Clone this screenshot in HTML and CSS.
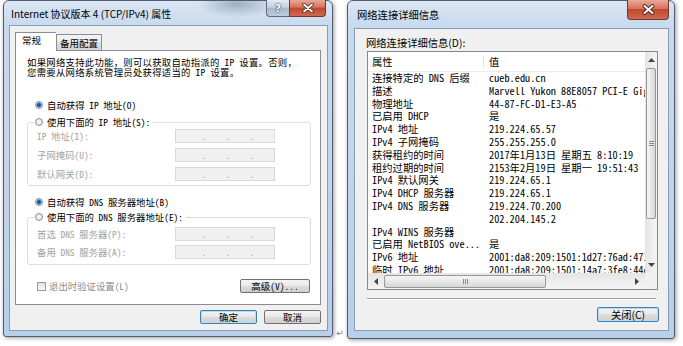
FILE: index.html
```html
<!DOCTYPE html>
<html lang="zh-CN">
<head>
  <meta charset="UTF-8" />
  <title>TCP/IPv4 属性 / 网络连接详细信息</title>
  <link rel="stylesheet" href="styles.css">
</head>
<body>
<div class="desk">

  <!-- left: IPv4 properties -->
  <div class="window props">
    <div class="titlebar">
      <span class="title">Internet 协议版本 4 (TCP/IPv4) 属性</span>
      <div class="caption-btns">
        <span class="cap help">?</span>
        <span class="cap close">
          <svg width="12" height="10" viewBox="0 0 12 10"><path d="M2 1.5 L10 8.5 M10 1.5 L2 8.5" stroke="#4b2a24" stroke-width="3.6" stroke-linecap="round"/><path d="M2 1.5 L10 8.5 M10 1.5 L2 8.5" stroke="#fff" stroke-width="1.8" stroke-linecap="round"/></svg>
        </span>
      </div>
    </div>
    <div class="client">
      <div class="tabs">
        <span class="tab active">常规</span>
        <span class="tab">备用配置</span>
      </div>
      <div class="panel">
        <p class="intro">如果网络支持此功能，则可以获取自动指派的 IP 设置。否则，<br>您需要从网络系统管理员处获得适当的 IP 设置。</p>

        <div class="opt first"><span class="radio on"></span>自动获得 IP 地址(O)</div>
        <fieldset class="group ip">
          <legend><span class="radio"></span>使用下面的 IP 地址(S):</legend>
          <div class="field"><span>IP 地址(I):</span><span class="ipbox"><b>.</b><b>.</b><b>.</b></span></div>
          <div class="field"><span>子网掩码(U):</span><span class="ipbox"><b>.</b><b>.</b><b>.</b></span></div>
          <div class="field"><span>默认网关(D):</span><span class="ipbox"><b>.</b><b>.</b><b>.</b></span></div>
        </fieldset>

        <div class="opt dns-auto"><span class="radio on"></span>自动获得 DNS 服务器地址(B)</div>
        <fieldset class="group dns">
          <legend><span class="radio"></span>使用下面的 DNS 服务器地址(E):</legend>
          <div class="field"><span>首选 DNS 服务器(P):</span><span class="ipbox"><b>.</b><b>.</b><b>.</b></span></div>
          <div class="field"><span>备用 DNS 服务器(A):</span><span class="ipbox"><b>.</b><b>.</b><b>.</b></span></div>
        </fieldset>

        <div class="foot">
          <span class="check"><span class="box"></span>退出时验证设置(L)</span>
          <button class="btn adv">高级(V)...</button>
        </div>
      </div>
      <div class="actions">
        <button class="btn default">确定</button>
        <button class="btn">取消</button>
      </div>
    </div>
  </div>

  <span class="mark">↵</span>

  <!-- right: connection details -->
  <div class="window details">
    <div class="titlebar">
      <span class="title">网络连接详细信息</span>
      <div class="caption-btns">
        <span class="cap close solo">
          <svg width="13" height="11" viewBox="0 0 13 11"><path d="M2.5 2 L10.5 9 M10.5 2 L2.5 9" stroke="#4b2a24" stroke-width="3.8" stroke-linecap="round"/><path d="M2.5 2 L10.5 9 M10.5 2 L2.5 9" stroke="#fff" stroke-width="2" stroke-linecap="round"/></svg>
        </span>
      </div>
    </div>
    <div class="client">
      <div class="caption">网络连接详细信息(D):</div>
      <div class="listview">
        <div class="lv-main">
          <div class="lv-head"><span>属性</span><span>值</span></div>
          <div class="lv-row"><span class="k">连接特定的 DNS 后缀</span><span class="v">cueb.edu.cn</span></div>
          <div class="lv-row"><span class="k">描述</span><span class="v">Marvell Yukon 88E8057 PCI-E Gigabit Ethernet Controller</span></div>
          <div class="lv-row"><span class="k">物理地址</span><span class="v">44-87-FC-D1-E3-A5</span></div>
          <div class="lv-row"><span class="k">已启用 DHCP</span><span class="v">是</span></div>
          <div class="lv-row"><span class="k">IPv4 地址</span><span class="v">219.224.65.57</span></div>
          <div class="lv-row"><span class="k">IPv4 子网掩码</span><span class="v">255.255.255.0</span></div>
          <div class="lv-row"><span class="k">获得租约的时间</span><span class="v">2017年1月13日 星期五 8:10:19</span></div>
          <div class="lv-row"><span class="k">租约过期的时间</span><span class="v">2153年2月19日 星期一 19:51:43</span></div>
          <div class="lv-row"><span class="k">IPv4 默认网关</span><span class="v">219.224.65.1</span></div>
          <div class="lv-row"><span class="k">IPv4 DHCP 服务器</span><span class="v">219.224.65.1</span></div>
          <div class="lv-row"><span class="k">IPv4 DNS 服务器</span><span class="v">219.224.70.200</span></div>
          <div class="lv-row"><span class="k"></span><span class="v">202.204.145.2</span></div>
          <div class="lv-row"><span class="k">IPv4 WINS 服务器</span><span class="v"></span></div>
          <div class="lv-row"><span class="k">已启用 NetBIOS ove...</span><span class="v">是</span></div>
          <div class="lv-row"><span class="k">IPv6 地址</span><span class="v">2001:da8:209:1501:1d27:76ad:4711:2</span></div>
          <div class="lv-row"><span class="k">临时 IPv6 地址</span><span class="v">2001:da8:209:1501:14a7:3fe8:44c1:9</span></div>
        </div>
        <div class="vscroll">
          <span class="sb-btn"><svg width="7" height="4" viewBox="0 0 7 4"><polygon points="0,4 3.5,0 7,4" fill="#444"/></svg></span>
          <span class="thumb v"><i></i><i></i><i></i></span>
          <span class="sb-track"></span>
          <span class="sb-btn"><svg width="7" height="4" viewBox="0 0 7 4"><polygon points="0,0 3.5,4 7,0" fill="#444"/></svg></span>
        </div>
        <div class="hscroll">
          <span class="sb-btn"><svg width="4" height="7" viewBox="0 0 4 7"><polygon points="4,0 0,3.5 4,7" fill="#444"/></svg></span>
          <span class="thumb h"><i></i><i></i><i></i></span>
          <span class="sb-track"></span>
          <span class="sb-btn"><svg width="4" height="7" viewBox="0 0 4 7"><polygon points="0,0 4,3.5 0,7" fill="#444"/></svg></span>
        </div>
        <div class="corner"></div>
      </div>
      <div class="sep"></div>
      <div class="actions">
        <button class="btn default close-btn">关闭(C)</button>
      </div>
    </div>
  </div>

</div>
</body>
</html>
```

FILE: styles.css
```css
* { box-sizing: border-box; }
body { margin: 0; background: #fff; font-family: "Noto Sans CJK SC", sans-serif; color: #000; }

.desk { display: flex; align-items: flex-start; width: 683px; height: 346px; padding-left: 3px; overflow: hidden; }

/* window frame */
.window { display: flex; flex-direction: column; border: 1px solid #4e5d72; border-radius: 6px 6px 3px 3px; background: linear-gradient(#dbe6f3, #c6d9ee 26px, #b9cfea); box-shadow: 1px 1px 4px rgba(0, 0, 0, .4); }
.props { width: 330px; height: 337px; padding: 0 4px 5px 5px; }
.details { width: 328px; height: 339px; padding: 0 5px 7px 6px; }

.titlebar { display: flex; align-items: flex-start; flex: none; }
.props .titlebar { height: 24px; background: radial-gradient(ellipse 40px 13px at 228px 3px, rgba(110, 130, 155, .55), transparent); }
.details .titlebar { height: 27px; }
.title { font-size: 10px; line-height: 12px; margin-top: 7px; margin-left: 2px; white-space: nowrap; }
.details .title { font-size: 10.3px; margin-top: 8px; margin-left: 3px; }

.caption-btns { display: flex; margin-left: auto; margin-top: -1px; margin-right: 2px; }
.details .caption-btns { margin-right: 0; }
.cap { display: flex; align-items: center; justify-content: center; height: 17px; border: 1px solid #5d6b80; border-top: 0; }
.help { width: 23px; border-radius: 0 0 0 4px; border-right: 0; background: linear-gradient(#e3eaf3, #c5d2e1 45%, #a8b8cc 50%, #bccbdc); color: #fff; font: bold 11px "DejaVu Sans", sans-serif; text-shadow: 0 0 2px #2b3a50, 0 0 1px #2b3a50; }
.close { width: 37px; border-radius: 0 0 4px 0; border-color: #6b3a32; background: linear-gradient(#e9a998, #d7745d 45%, #c4452d 50%, #d06a51); }
.close.solo { width: 42px; height: 20px; border-radius: 0 0 4px 4px; }

.client { flex: 1; display: flex; flex-direction: column; background: #f0f0f0; border: 1px solid #8a9cb3; }
.props .client { padding: 6px 6px 5px 5px; }
.details .client { padding: 9px 9px 7px 11px; }

/* tabs */
.tabs { display: flex; align-items: flex-end; height: 18px; font-size: 9.5px; }
.tab { height: 16px; padding: 0 3px; line-height: 16px; border: 1px solid #898c95; border-bottom: 0; background: linear-gradient(#f4f4f4, #ececec 50%, #dedede 50%, #d3d3d3); white-space: nowrap; }
.tab.active { position: relative; z-index: 1; width: 41px; height: 19px; margin-bottom: -1px; padding-left: 6px; line-height: 15px; background: #fff; border-right: 0; }

.panel { height: 255px; padding: 6px 9px 0 11px; background: #fff; border: 1px solid #898c95; font-family: "Noto Sans Mono CJK SC", "Noto Sans CJK SC", monospace; font-size: 9.4px; line-height: 10px; }
.intro { margin: 0; white-space: nowrap; letter-spacing: .25px; }

.opt { display: flex; align-items: center; gap: 4px; height: 10px; margin-left: 8px; white-space: nowrap; }
.opt.first { margin-top: 23px; }
.opt.dns-auto { margin-top: 11px; }

.radio { flex: none; width: 8px; height: 8px; border-radius: 50%; border: 1px solid #8f9092; background: radial-gradient(circle, #fafafa, #d9d9d9); }
.radio.on { background: radial-gradient(circle, #17549c 0 1.4px, #3f8bd3 2px, #a7d0f0 2.8px, #e6e6e6 3.2px); }

.group { margin: 7px 0 0; min-width: 0; border: 1px solid #d5dfe5; border-radius: 3px; }
.group.ip { padding: 2px 35px 4px 9px; }
.group.dns { margin-top: 5px; padding: 5px 35px 5px 9px; }
.group legend { display: flex; align-items: center; gap: 4px; height: 10px; margin-left: -3px; padding: 0 3px 0 1px; white-space: nowrap; }

.field { display: flex; align-items: center; justify-content: space-between; height: 14px; color: #a3a3a3; white-space: nowrap; }
.field + .field { margin-top: 5px; }
.dns .field + .field { margin-top: 4px; }
.ipbox { display: flex; align-items: center; justify-content: space-evenly; width: 100px; height: 14px; padding-left: 6px; border: 1px solid #d9d9d9; background: #f0f0f0; }
.ipbox b { font-weight: normal; color: #9a9a9a; line-height: 8px; }

.foot { display: flex; align-items: center; justify-content: space-between; height: 14px; margin-top: 14px; padding: 0 1px 0 10px; }
.check { display: flex; align-items: center; gap: 3px; color: #8c8c8c; }
.check .box { width: 9px; height: 9px; border: 1px solid #9a9a9a; background: linear-gradient(#e2e2e2, #f7f7f7); }

/* buttons */
.btn { height: 14px; padding: 0; border: 1px solid #707070; border-radius: 2px; background: linear-gradient(#f3f3f3, #ebebeb 45%, #dddddd 50%, #d0d0d0); color: #000; font-family: "Noto Sans CJK SC", sans-serif; font-size: 9.5px; line-height: 12px; }
.btn.default { border-color: #3c7fb1; box-shadow: inset 0 0 0 1px #b9dcf4; }
.btn.adv { width: 70px; font-family: "Noto Sans Mono CJK SC", "Noto Sans CJK SC", monospace; }

.actions { display: flex; justify-content: flex-end; gap: 7px; margin-top: 5px; }
.props .actions .btn { width: 57px; }

/* details dialog */
.caption { font-size: 10.3px; line-height: 10px; white-space: nowrap; }

.listview { display: grid; grid-template-columns: 1fr 12px; grid-template-rows: 1fr 16px; width: 291px; height: 239px; margin: 3px 0 0 1px; border: 1px solid #828790; background: #fff; overflow: hidden; }
.lv-main { overflow: hidden; font-size: 10.3px; }
.lv-head { display: flex; align-items: center; height: 20px; border-bottom: 1px solid #ececec; line-height: 12px; }
.lv-head span:first-child { width: 116px; padding-left: 4px; border-right: 1px solid #e3e3e3; }
.lv-head span:last-child { padding-left: 5px; }
.lv-row { display: flex; height: 12.8px; line-height: 12.8px; white-space: nowrap; font-family: "Noto Sans Mono CJK SC", "Noto Sans CJK SC", monospace; }
.lv-row .k { flex: none; width: 121px; padding-left: 4px; }
.lv-row .v { flex: none; }

.vscroll { display: flex; flex-direction: column; border-left: 1px solid #e4e4e4; background: linear-gradient(90deg, #e6e6e6, #f4f4f4); }
.hscroll { display: flex; border-top: 1px solid #e4e4e4; background: linear-gradient(#e6e6e6, #f4f4f4); }
.corner { background: #f0f0f0; }
.sb-btn { flex: none; display: flex; align-items: center; justify-content: center; width: 100%; height: 16px; }
.hscroll .sb-btn { width: 16px; height: 100%; }
.sb-track { flex: 1; }
.thumb { flex: none; display: flex; align-items: center; justify-content: center; gap: 1px; border: 1px solid #979797; border-radius: 2px; }
.thumb.v { flex-direction: column; height: 151px; margin: 0 1px 0 0; background: linear-gradient(90deg, #f5f5f5, #e8e8e8 50%, #d6d6d6); }
.thumb.h { width: 162px; margin: 1px 0 1px 0; background: linear-gradient(#f5f5f5, #e8e8e8 50%, #d6d6d6); }
.thumb i { display: block; background: #8a8a8a; }
.thumb.v i { width: 5px; height: 1px; }
.thumb.h i { width: 1px; height: 5px; }

.sep { width: 289px; height: 2px; margin: 8px 0 0 1px; border-top: 1px solid #a0a0a0; border-bottom: 1px solid #fff; }
.details .actions { margin-top: 7px; }
.close-btn { width: 62px; height: 15px; font-size: 10.3px; }

.mark { width: 14px; margin-top: 328px; text-align: center; color: #7a7a7a; font: 9px "DejaVu Sans", sans-serif; }
```
